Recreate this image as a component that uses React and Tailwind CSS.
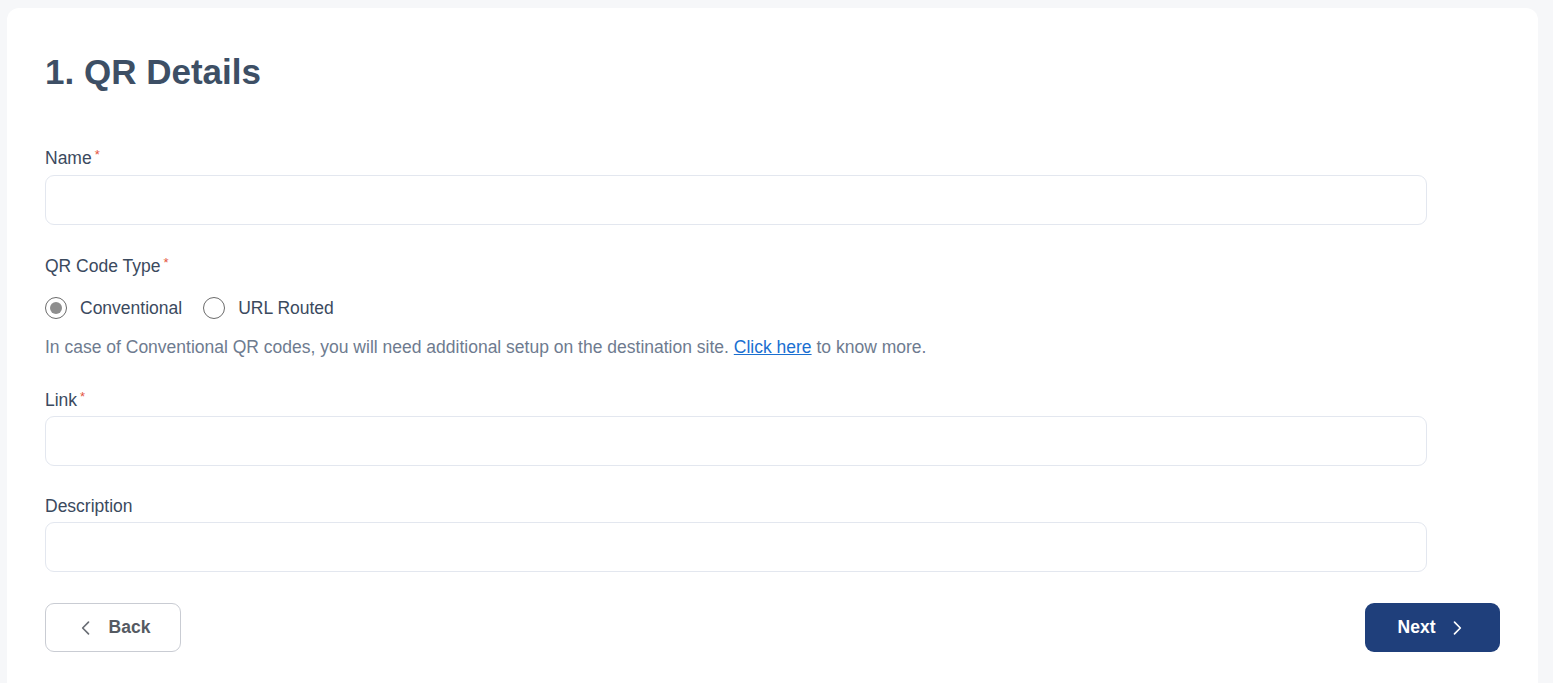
import React from "react";

const font = { fontFamily: '"Liberation Sans", Arial, sans-serif' };

function Label({ children, required, className = "" }) {
  return (
    <div className={`text-[17.5px] leading-[24px] text-[#3b4a5e] ${className}`}>
      {children}
      {required && (
        <span className="ml-[3px] align-top text-[13px] leading-[18px] text-[#e4563f]">*</span>
      )}
    </div>
  );
}

function Input({ className = "" }) {
  return (
    <input
      type="text"
      className={`block h-[50px] w-[1382px] rounded-[9px] border border-[#e3e7ef] bg-white px-4 text-[17px] outline-none ${className}`}
    />
  );
}

function Radio({ checked, label }) {
  return (
    <label className="flex items-center gap-[13px]">
      <span className="flex h-[22px] w-[22px] items-center justify-center rounded-full border border-[#6b6b6b] bg-white">
        {checked && <span className="h-[12px] w-[12px] rounded-full bg-[#8e8e8e]" />}
      </span>
      <span className="text-[17.5px] leading-[24px] text-[#3b4a5e]">{label}</span>
    </label>
  );
}

export default function App() {
  return (
    <div className="min-h-[683px] bg-[#f6f7f9] pl-[7px] pr-[15px] pt-[8px]" style={font}>
      <div className="min-h-[675px] rounded-t-[12px] bg-white pl-[38px] pr-[38px] pt-[43px]">
        <h1 className="text-[35px] font-bold leading-[42px] text-[#3d4f65]">1. QR Details</h1>

        <Label required className="mt-[53px]">Name</Label>
        <Input className="mt-[5px]" />

        <Label required className="mt-[29px]">QR Code Type</Label>
        <div className="mt-[18px] flex items-center gap-[21px]">
          <Radio checked label="Conventional" />
          <Radio label="URL Routed" />
        </div>
        <p className="mt-[15px] text-[17.5px] leading-[24px] text-[#6e7b8f]">
          In case of Conventional QR codes, you will need additional setup on the destination site.{" "}
          <a href="#" className="text-[#1a6fd1] underline">Click here</a> to know more.
        </p>

        <Label required className="mt-[29px]">Link</Label>
        <Input className="mt-[4px]" />

        <Label className="mt-[28px]">Description</Label>
        <Input className="mt-[4px]" />

        <div className="mt-[31px] flex items-center justify-between">
          <button className="flex h-[49px] w-[136px] items-center justify-center gap-[13px] rounded-[9px] border border-[#c9ccd3] bg-white text-[17.5px] font-bold text-[#555a62]">
            <svg width="20" height="20" viewBox="0 0 24 24" fill="none" stroke="#6a6e75" strokeWidth="2" strokeLinecap="round" strokeLinejoin="round">
              <path d="M15 5l-7 7 7 7" />
            </svg>
            Back
          </button>
          <button className="flex h-[49px] w-[135px] items-center justify-center gap-[12px] rounded-[9px] bg-[#1f3f7b] text-[17.5px] font-bold text-white">
            Next
            <svg width="20" height="20" viewBox="0 0 24 24" fill="none" stroke="#ffffff" strokeWidth="2" strokeLinecap="round" strokeLinejoin="round">
              <path d="M9 5l7 7-7 7" />
            </svg>
          </button>
        </div>
      </div>
    </div>
  );
}
